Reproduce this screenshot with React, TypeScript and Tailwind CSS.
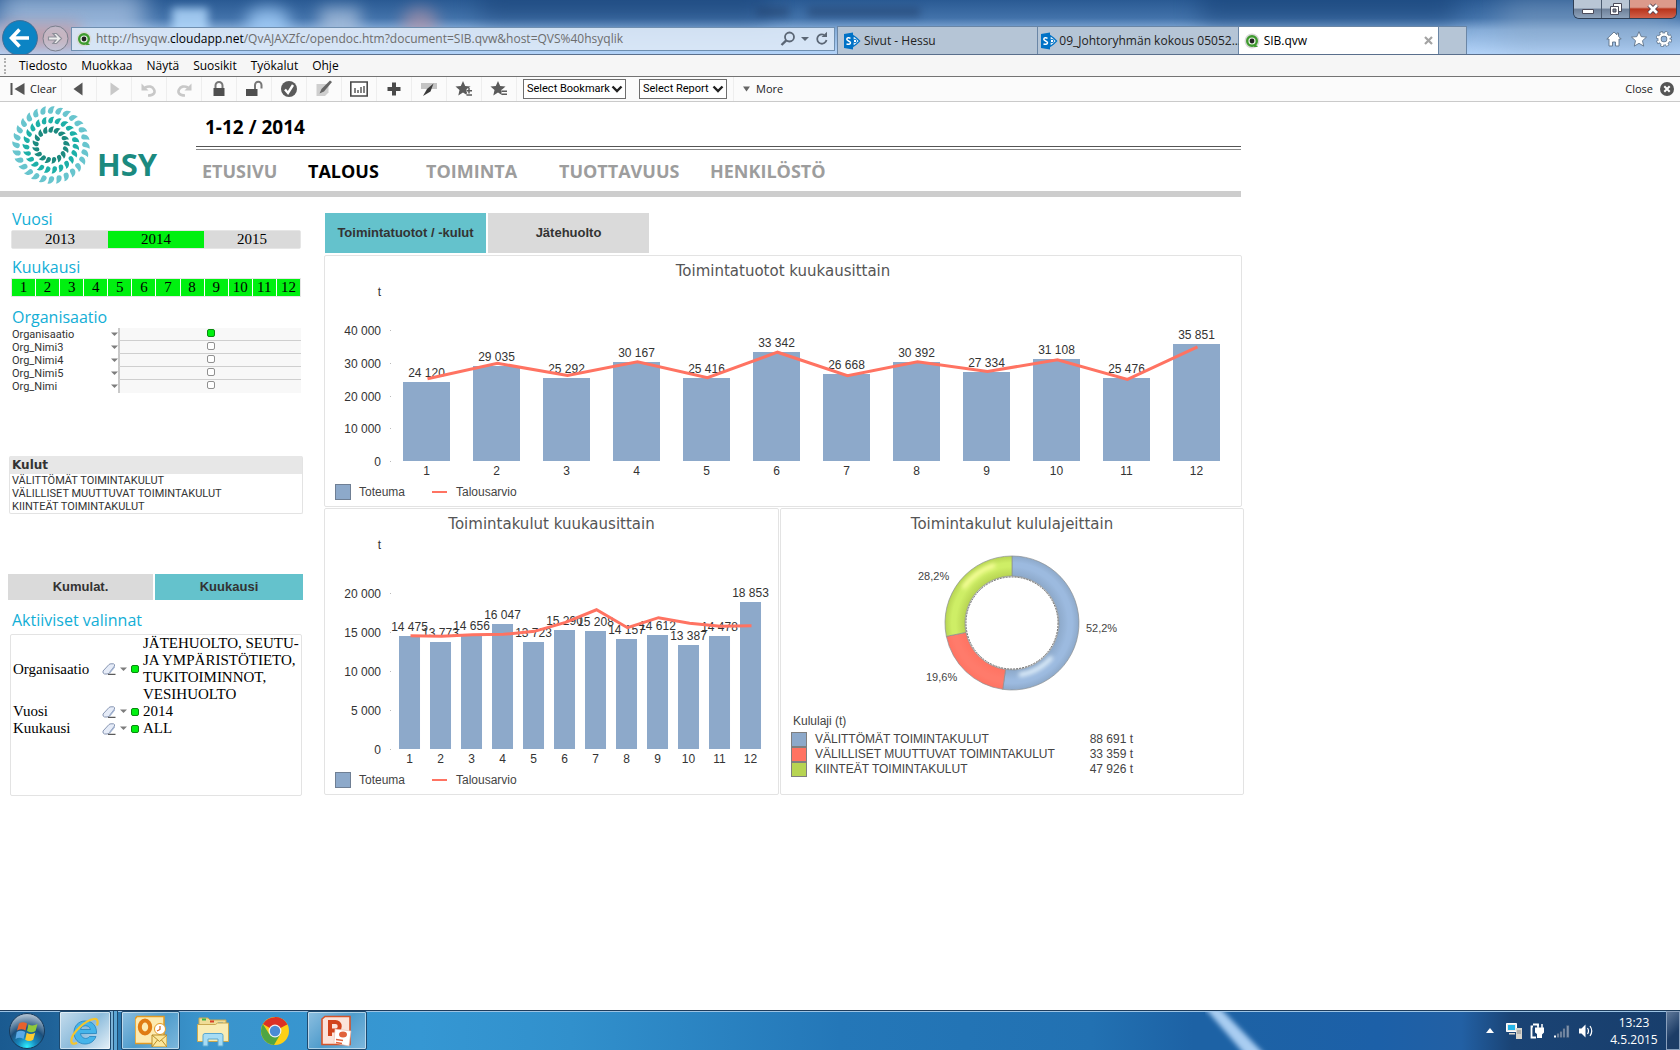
import React from 'react';
import clsx from 'clsx';

const UI_FONT = "font-['Open_Sans','Noto_Sans',sans-serif]";
const SMALL_FONT = "font-['Roboto','Open_Sans',sans-serif]";
const ARIAL = "font-['Liberation_Sans',Arial,sans-serif]";
const TIMES = "font-['Liberation_Serif','Times_New_Roman',serif]";

const MONTHS = [1, 2, 3, 4, 5, 6, 7, 8, 9, 10, 11, 12];

const formatNumber = (value: number) =>
  String(value).replace(/\B(?=(\d{3})+(?!\d))/g, '\u00a0');

/* ---------- Browser frame ---------- */

const QlikIcon = () => (
  <svg className="h-4 w-4 shrink-0" viewBox="0 0 16 16">
    <circle cx="8" cy="8" r="7.5" fill="#d9d9d9" />
    <circle cx="8" cy="8" r="4.8" fill="#e8f2e4" stroke="#3f9b2f" strokeWidth="2.4" />
    <path d="M10.5 10.5l3.5 3.5h-4z" fill="#3f9b2f" />
    <circle cx="8" cy="8" r="2.4" fill="#222" />
  </svg>
);

const SharePointIcon = () => (
  <svg className="h-[18px] w-[18px] shrink-0" viewBox="0 0 18 18">
    <path d="M10 3.5l3.5 2.5 3 3-3 3-3.5 2.5z" fill="#fff" stroke="#0072c6" strokeWidth="1.4" />
    <circle cx="12" cy="9" r="1.8" fill="none" stroke="#0072c6" />
    <path d="M1 2l9-1.5v17L1 16z" fill="#0072c6" />
    <path d="M7.5 6.3C6 5.5 3.8 5.600 3.8 7.200c0 2 3.7 1.500 3.7 3.600 0 1.700-2.400 1.800-4 1" fill="none" stroke="#fff" strokeWidth="1.500" />
  </svg>
);

const TitleBar = () => (
  <header className="relative h-[55px] overflow-hidden border-b border-[#5a6f8c] bg-[linear-gradient(to_bottom,#2a5a93_0px,#4272aa_18px,#86add9_30px,#b2d2f7_53px)]">
    <div className="absolute inset-0 overflow-hidden" aria-hidden="true">
      <div className="absolute -top-2 left-0 h-14 w-36 bg-[#b4cbe8] opacity-70 blur-md" />
      <div className="absolute top-6 left-0 h-6 w-20 bg-[#c98f92] opacity-70 blur-sm" />
      <div className="absolute top-2 left-[172px] h-8 w-9 bg-[#b6dcff] opacity-80 blur-xs" />
      <div className="absolute top-2 left-[246px] h-8 w-11 rounded-full bg-[#a5d0fb] opacity-80 blur-sm" />
      <div className="absolute top-2 left-[320px] h-8 w-10 bg-[#a9c0dd] opacity-80 blur-sm" />
      <div className="absolute top-2 left-[402px] h-8 w-9 rounded-full bg-[#c39aa8] opacity-60 blur-sm" />
      <div className="absolute -top-3 left-[480px] h-8 w-72 bg-[#1a4377] opacity-60 blur-md" />
      <div className="absolute -top-3 left-[1200px] h-9 w-64 bg-[#123c70] opacity-50 blur-md" />
      <div className="absolute top-0 left-[1500px] h-12 w-44 bg-[#8fabc9] opacity-50 blur-lg" />
      <div className="absolute top-2 left-[757px] h-2 w-8 bg-[#1f3c66] opacity-60 blur-xs" />
      <div className="absolute top-2 left-[808px] h-2 w-28 bg-[#1f3c66] opacity-60 blur-xs" />
    </div>
    <div className="relative flex h-[54px] items-end">
      <nav className="flex h-[52px] w-[71px] shrink-0 items-center pt-5">
        <button aria-label="Takaisin" className="ml-[2px] shrink-0">
          <svg className="h-9 w-9" viewBox="0 0 36 36">
            <circle cx="18" cy="18" r="17.4" fill="#0c84c4" stroke="#3c6e98" />
            <path d="M27 18H10M17.5 9.5L9.5 18l8 8.5" fill="none" stroke="#fff" strokeWidth="3.6" />
          </svg>
        </button>
        <button aria-label="Eteenpäin" className="ml-1 shrink-0">
          <svg className="h-[27px] w-[27px]" viewBox="0 0 27 27">
            <circle cx="13.5" cy="13.5" r="12.5" fill="#d8d3da" fillOpacity=".4" stroke="#7a7f8c" />
            <path d="M6.5 12h7.500L11 8.500h3.500l5 5-5 5H11l3-3.500H6.500z" fill="#eee" stroke="#8d8f99" strokeWidth="1.2" />
          </svg>
        </button>
      </nav>
      <div className="mb-[3px] flex h-6 min-w-0 flex-[754] items-center border border-[#6f8fb0] bg-[#dce8f6]/90 px-1">
        <QlikIcon />
        <div
          role="textbox"
          aria-label="Osoite"
          contentEditable
          suppressContentEditableWarning
          className="ml-1 min-w-0 flex-1 truncate text-[12px] leading-5 text-[#6d6d6d]"
        >
          http://hsyqw.<span className="text-black">cloudapp.net</span>/QvAJAXZfc/opendoc.htm?document=SIB.qvw&amp;host=QVS%40hsyqlik
        </div>
        <button aria-label="Haku">
          <svg className="h-4 w-4" viewBox="0 0 16 16" fill="none" stroke="#5b6675" strokeWidth="1.8">
            <circle cx="9.5" cy="6" r="4.5" />
            <path d="M6.3 9.3L1.5 14" strokeWidth="2.4" />
          </svg>
        </button>
        <svg className="mx-[5px] h-2 w-2" viewBox="0 0 8 8"><path d="M0 2h8L4 6z" fill="#5b6675" /></svg>
        <button aria-label="Päivitä">
          <svg className="h-4 w-4" viewBox="0 0 16 16" fill="none" stroke="#5b6675" strokeWidth="1.8">
            <path d="M12.5 9a4.7 4.7 0 1 1-2.500-5.200" />
            <path d="M7.5 6h5.500V.8z" fill="#5b6675" stroke="none" />
          </svg>
        </button>
      </div>
      <div role="tablist" className="ml-[2px] flex h-[28px] min-w-0 flex-[628] border border-b-0 border-[#6a86a6] text-[12px] text-[#222]">
        <button role="tab" className="flex min-w-0 flex-[194] items-center gap-[3px] border-r border-[#6a86a6] bg-[#b5c5d6] pl-[5px]">
          <SharePointIcon />
          <span className="truncate">Sivut - Hessu</span>
        </button>
        <button role="tab" className="flex min-w-0 flex-[197] items-center gap-px border-r border-[#6a86a6] bg-[#b5c5d6] pl-[2px]">
          <SharePointIcon />
          <span className="whitespace-nowrap">09_Johtoryhmän kokous 05052...</span>
        </button>
        <button role="tab" aria-selected="true" className="flex min-w-0 flex-[189] items-center border-r border-[#6a86a6] bg-white px-[5px]">
          <QlikIcon />
          <span className="ml-1 flex-1 text-left text-black">SIB.qvw</span>
          <svg className="h-[9px] w-[9px]" viewBox="0 0 9 9"><path d="M1 1l7 7M8 1L1 8" stroke="#a3a3a3" strokeWidth="2.2" /></svg>
        </button>
        <button aria-label="Uusi välilehti" className="flex-[27] bg-[#b5c5d6]" />
      </div>
      <div className="flex h-full flex-[210] flex-col items-end justify-between pr-[3px] pb-[7px]">
        <div className="flex h-[19px] w-[104px] overflow-hidden rounded-b-md border border-t-0 border-[#2f3f55]">
          <button aria-label="Pienennä" className="flex flex-[28] items-center justify-center border-r border-[#4b5b70] bg-[linear-gradient(#b9c6d5_45%,#6d8099_50%,#8fa3bb)]">
            <svg className="h-3 w-3" viewBox="0 0 12 12"><path d="M.5 6.5h11v4H.5z" fill="#fff" stroke="#4b4b5a" /></svg>
          </button>
          <button aria-label="Palauta" className="flex flex-[27] items-center justify-center border-r border-[#4b5b70] bg-[linear-gradient(#b9c6d5_45%,#6d8099_50%,#8fa3bb)]">
            <svg className="h-3 w-3" viewBox="0 0 12 12" fill="#fff" stroke="#4b4b5a">
              <path d="M3.5.5h8v8h-8z" />
              <path d="M.5 3.5h8v8h-8z" />
              <path d="M3 6h3v3H3z" fill="#7b8797" />
            </svg>
          </button>
          <button aria-label="Sulje" className="flex flex-[47] items-center justify-center bg-[linear-gradient(#dc9a8b_40%,#b8341c_50%,#d2614a)]">
            <svg className="h-3 w-3" viewBox="0 0 12 12">
              <path d="M2 2l8 8M10 2l-8 8" stroke="#4b3b4a" strokeWidth="4.5" />
              <path d="M2 2l8 8M10 2l-8 8" stroke="#fff" strokeWidth="2.8" />
            </svg>
          </button>
        </div>
        <div className="flex gap-[9px] pr-[5px]">
          <svg className="h-4 w-4" viewBox="0 0 16 16"><path d="M8 1L.8 8H3v7h3.500v-4h3v4H13V8h2.200L12.500 5.300V2H11v1.800z" fill="#fff" stroke="#5f7389" strokeWidth=".9" /></svg>
          <svg className="h-4 w-4" viewBox="0 0 16 16"><path d="M8 .6l2.200 5 5.300.5-4 3.600 1.200 5.400L8 12.300l-4.700 2.800 1.200-5.400-4-3.600 5.300-.5z" fill="#fff" stroke="#5f7389" strokeWidth=".9" /></svg>
          <svg className="h-4 w-4" viewBox="0 0 16 16" fill="none">
            <circle cx="8" cy="8" r="6.2" stroke="#5f7389" strokeWidth="3.6" strokeDasharray="3 1.87" />
            <circle cx="8" cy="8" r="4.5" stroke="#5f7389" strokeWidth="4" />
            <circle cx="8" cy="8" r="4.5" stroke="#fff" strokeWidth="2.4" />
            <circle cx="8" cy="8" r="6.2" stroke="#fff" strokeWidth="2.2" strokeDasharray="2 2.87" strokeDashoffset="-.5" />
          </svg>
        </div>
      </div>
    </div>
  </header>
);

const MENU = ['Tiedosto', 'Muokkaa', 'Näytä', 'Suosikit', 'Työkalut', 'Ohje'];

const MenuBar = () => (
  <nav className="flex h-[22px] items-center border-b border-[#737373] bg-[#f6f6f6] pl-1 text-[12px] text-black">
    <div className="h-4 w-[2px] border-l-2 border-dotted border-[#b0b0b0]" />
    <div className="ml-[13px] flex gap-[14px]">
      {MENU.map((item) => (
        <button key={item}>{item}</button>
      ))}
    </div>
  </nav>
);

/* ---------- QlikView toolbar ---------- */

const TOOLS: { label: string; icon: React.ReactNode }[] = [
  { label: 'Back', icon: <path d="M12.5 2.5v13L3.5 9z" fill="#555" /> },
  { label: 'Forward', icon: <path d="M5.5 2.5v13l9-6.5z" fill="#c8c8c8" /> },
  {
    label: 'Undo',
    icon: (
      <>
        <path d="M8 15.500c6 0 7.500-3 6-6S9 5.500 5 7.500" fill="none" stroke="#c8c8c8" strokeWidth="2.6" />
        <path d="M1.500 3.500v7h7z" fill="#c8c8c8" />
      </>
    ),
  },
  {
    label: 'Redo',
    icon: (
      <>
        <path d="M10 15.500c-6 0-7.500-3-6-6S9 5.500 13 7.500" fill="none" stroke="#c8c8c8" strokeWidth="2.6" />
        <path d="M16.500 3.500v7h-7z" fill="#c8c8c8" />
      </>
    ),
  },
  {
    label: 'Lock',
    icon: (
      <>
        <path d="M5.500 9V5.500a3.500 3.500 0 0 1 7 0V9" fill="none" stroke="#777" strokeWidth="2" />
        <path d="M3.500 8h11v8h-11z" fill="#4f4f4f" />
      </>
    ),
  },
  {
    label: 'Unlock',
    icon: (
      <>
        <path d="M10 9V5a3.200 3.200 0 0 1 6.500 0v3.500" fill="none" stroke="#777" strokeWidth="2" />
        <path d="M1 9h11.500v7H1z" fill="#4f4f4f" />
      </>
    ),
  },
  {
    label: 'Current selections',
    icon: (
      <>
        <circle cx="9" cy="9" r="8" fill="#5a5a5a" />
        <path d="M5 9.500l3 3.500 5-8" fill="none" stroke="#fff" strokeWidth="2.4" />
      </>
    ),
  },
  {
    label: 'Notes',
    icon: (
      <>
        <path d="M1.500 4h12v8.500l-3.500 3.500H1.500z" fill="#cfcfcf" />
        <path d="M15 .5L6.500 9 4.500 13.500 9 11.500 17 2z" fill="#666" />
      </>
    ),
  },
  {
    label: 'Chart',
    icon: (
      <>
        <path d="M.8 2h16.400v14H.8z" fill="#fff" stroke="#4a4a4a" strokeWidth="1.600" />
        <path d="M5 13V8M8 13v-3M11 13V7M14 13V6" stroke="#666" strokeWidth="1.600" />
      </>
    ),
  },
  { label: 'Add', icon: <path d="M9 2.500v13M2.500 9h13" stroke="#4a4a4a" strokeWidth="4" /> },
  {
    label: 'Edit',
    icon: (
      <>
        <path d="M1 3h16v6H1z" fill="#c4c4c4" />
        <path d="M13.500 3.500L7 9 3 16l7.500-4.500z" fill="#3a3a3a" />
      </>
    ),
  },
  {
    label: 'Add bookmark',
    icon: (
      <>
        <path d="M8 1l2.200 5 5.300.5-4 3.600L12.700 15.500 8 12.500 3.300 15.500l1.200-5.400-4-3.600L5.800 6z" fill="#5a5a5a" />
        <path d="M14 8v5.500M11.500 10.700h5.500M11.500 15h5.500" stroke="#fbfbfb" strokeWidth="3" />
        <path d="M14 8v5.500M11.500 10.700h5.500M11.500 15h5.500" stroke="#5a5a5a" strokeWidth="1.500" />
      </>
    ),
  },
  {
    label: 'Remove bookmark',
    icon: (
      <>
        <path d="M8 1l2.200 5 5.300.5-4 3.600L12.700 15.500 8 12.500 3.300 15.500l1.200-5.400-4-3.600L5.800 6z" fill="#5a5a5a" />
        <path d="M11.500 11.300h5.500M11.500 14.300h5.500" stroke="#fbfbfb" strokeWidth="3" />
        <path d="M11.500 11.300h5.500M11.500 14.300h5.500" stroke="#5a5a5a" strokeWidth="1.500" />
      </>
    ),
  },
];

const ToolbarSelect = ({ label, className }: { label: string; className: string }) => (
  <div className={clsx('relative', className)}>
    <select
      aria-label={label}
      className={clsx('block h-5 w-full appearance-none border border-[#6e6e6e] bg-white pl-[3px] text-[11px] leading-4 text-black', SMALL_FONT)}
    >
      <option>{label}</option>
    </select>
    <svg className="pointer-events-none absolute top-[6px] right-[3px] h-2 w-3" viewBox="0 0 12 8">
      <path d="M1.500 1.500L6 6l4.500-4.500" fill="none" stroke="#222" strokeWidth="2.4" />
    </svg>
  </div>
);

const QlikToolbar = () => (
  <div className="flex h-[25px] items-center border-b border-[#cacaca] bg-[#fbfbfb] text-[11px] text-[#222]">
    <button className="flex h-full w-[62px] items-center gap-[5px] border-r border-[#eee] pl-[10px]">
      <svg className="h-[14px] w-[15px]" viewBox="0 0 15 14">
        <path d="M.5 1h2v12h-2zM14.500 1v12L4.500 7z" fill="#555" />
      </svg>
      Clear
    </button>
    {TOOLS.map(({ label, icon }) => (
      <button key={label} aria-label={label} className="flex h-full w-[35px] items-center justify-center border-r border-[#eee]">
        <svg className="h-[18px] w-[18px]" viewBox="0 0 18 18">{icon}</svg>
      </button>
    ))}
    <ToolbarSelect label="Select Bookmark" className="ml-[6px] w-[103px]" />
    <ToolbarSelect label="Select Report" className="ml-[13px] w-[88px]" />
    <button className="ml-[6px] flex h-full items-center gap-[6px] border-l border-[#eee] pl-[9px]">
      <svg className="h-[6px] w-[7px]" viewBox="0 0 7 6"><path d="M0 .5h7L3.500 5.500z" fill="#666" /></svg>
      More
    </button>
    <button className="mr-[6px] ml-auto flex items-center gap-[7px]">
      Close
      <svg className="h-[14px] w-[14px]" viewBox="0 0 14 14">
        <circle cx="7" cy="7" r="7" fill="#555" />
        <path d="M4.300 4.300l5.400 5.400M9.700 4.300L4.300 9.700" stroke="#fff" strokeWidth="2" />
      </svg>
    </button>
  </div>
);

/* ---------- Page header ---------- */

const LOGO_RINGS = [
  { count: 28, radius: 35, size: 0.95, color: '#68c5ce' },
  { count: 23, radius: 25, size: 0.85, color: '#1db0a8' },
  { count: 17, radius: 15.500, size: 0.8, color: '#1b8a7f' },
];

const HsyLogo = () => (
  <svg className="h-[80px] w-[80px] shrink-0" viewBox="-40 -40 80 80" aria-hidden="true">
    {LOGO_RINGS.map(({ count, radius, size, color }) =>
      Array.from({ length: count }, (_, i) => (
        <path
          key={`${color}-${i}`}
          d="M3 -4.500C0 -4.500 -3 -2 -3 1.200A2.700 2.700 0 0 0 2.400 1.600C2.600 -.5 1.800 -2 3 -4.500Z"
          fill={color}
          transform={`rotate(${(360 / count) * i}) translate(0 ${-radius}) rotate(12) scale(${size})`}
        />
      ))
    )}
  </svg>
);

const NAV = [
  { label: 'ETUSIVU', width: 'w-[106px]' },
  { label: 'TALOUS', width: 'w-[118px]', active: true },
  { label: 'TOIMINTA', width: 'w-[133px]' },
  { label: 'TUOTTAVUUS', width: 'w-[151px]' },
  { label: 'HENKILÖSTÖ', width: 'w-[130px]' },
];

const PageHeader = () => (
  <div className="mr-[3px] flex h-[95px] border-b-[6px] border-[#cdcdcd]">
    <div className="flex w-[196px] shrink-0 items-start pt-[3px] pl-[11px]">
      <HsyLogo />
      <span className="mt-[39px] ml-[6px] text-[31px] leading-10 font-bold text-[#1b8a7f]">HSY</span>
    </div>
    <div className="flex-1">
      <h1 className="pt-[13px] pb-[7px] pl-[9px] text-[19px] leading-6 font-bold text-black">1-12 / 2014</h1>
      <div className="h-1 border-y border-t-[#555] border-b-[#8a8a8a]" />
      <nav className="flex pt-[9px] pl-[6px] text-[18px] leading-6 font-bold">
        {NAV.map(({ label, width, active }) => (
          <a key={label} href="#" className={clsx('shrink-0', width, active ? 'text-black' : 'text-[#9d9d9d]')}>
            {label}
          </a>
        ))}
      </nav>
    </div>
  </div>
);

/* ---------- Sidebar ---------- */

const SectionTitle = ({ children, className }: { children: React.ReactNode; className?: string }) => (
  <h2 className={clsx('pl-1 text-[16px] leading-[22px] text-[#12aed6]', className)}>{children}</h2>
);

const DownArrow = () => (
  <svg className="h-[5px] w-[7px] shrink-0" viewBox="0 0 7 5"><path d="M0 .5h7L3.500 4z" fill="#7d7d7d" /></svg>
);

const Indicator = ({ on }: { on: boolean }) => (
  <span className={clsx('block h-2 w-2 shrink-0 rounded-xs border', on ? 'border-[#0a8a10] bg-[#00f010]' : 'border-[#909090] bg-white')} />
);

const Eraser = () => (
  <svg className="h-3 w-[14px] shrink-0" viewBox="0 0 14 12">
    <path d="M1 8L7 1.500Q8 .8 9 .8h2.500Q13 1.200 12.500 3L7.500 9.500Q6.500 11 5 11H2.500Q.5 10.500 1 8z" fill="#e6ecf8" stroke="#8896b2" />
    <path d="M6.500 10.500L12.500 3l.3 1.500L8 10.500z" fill="#9fb0cf" />
    <path d="M6 11.300h7.500" stroke="#333" />
  </svg>
);

const ORG_LEVELS = ['Organisaatio', 'Org_Nimi3', 'Org_Nimi4', 'Org_Nimi5', 'Org_Nimi'];
const COST_TYPES = ['VÄLITTÖMÄT TOIMINTAKULUT', 'VÄLILLISET MUUTTUVAT TOIMINTAKULUT', 'KIINTEÄT TOIMINTAKULUT'];

const SELECTIONS = [
  { field: 'Organisaatio', value: 'JÄTEHUOLTO, SEUTU- JA YMPÄRISTÖTIETO, TUKITOIMINNOT, VESIHUOLTO' },
  { field: 'Vuosi', value: '2014' },
  { field: 'Kuukausi', value: 'ALL' },
];

const Sidebar = () => (
  <aside className="w-[324px] shrink-0 pt-[11px] pr-[21px] pl-2">
    <SectionTitle>Vuosi</SectionTitle>
    <div className={clsx('mr-[2px] ml-[3px] flex h-[19px] rounded-xs border border-[#e6e6e6] text-[15px] leading-[17px]', TIMES)}>
      {[2013, 2014, 2015].map((year) => (
        <button key={year} className={clsx('flex-1', year === 2014 ? 'bg-[#00f010]' : 'bg-[#dadada]')}>
          {year}
        </button>
      ))}
    </div>

    <SectionTitle className="mt-[7px]">Kuukausi</SectionTitle>
    <div className={clsx('mr-[2px] ml-[3px] flex h-[19px] gap-px border border-[#e6e6e6] text-[15px] leading-[17px]', TIMES)}>
      {MONTHS.map((month) => (
        <button key={month} className="flex-1 bg-[#00f010]">{month}</button>
      ))}
    </div>

    <SectionTitle className="mt-[9px]">Organisaatio</SectionTitle>
    <ul className={clsx('mr-[2px] ml-1 text-[11px] leading-[13px] text-[#333]', SMALL_FONT)}>
      {ORG_LEVELS.map((level, i) => (
        <li key={level} className="flex h-[13px]">
          <button className="flex w-[106px] shrink-0 items-center justify-between overflow-hidden">
            {level}
            <DownArrow />
          </button>
          <div className={clsx('flex flex-1 justify-center border-l-2 border-l-[#c9c9c9] bg-[#f8f8f8] pt-px', i < 4 && 'border-b border-b-[#cfcfcf]')}>
            <Indicator on={i === 0} />
          </div>
        </li>
      ))}
    </ul>

    <section className="mt-[63px] ml-px rounded-xs border border-t-0 border-[#e3e3e3] text-[#333]">
      <h2 className="bg-[#e7e7e7] pl-[2px] font-['DejaVu_Sans',sans-serif] text-[12px] leading-[18px] font-bold">Kulut</h2>
      <ul className={clsx('pl-[2px] text-[11px] leading-[13px]', SMALL_FONT)}>
        {COST_TYPES.map((type) => (
          <li key={type}>{type}</li>
        ))}
      </ul>
    </section>

    <div className={clsx('mt-[60px] flex h-[26px] gap-[2px] text-[13px] font-bold text-[#333]', ARIAL)}>
      <button className="flex-[145] bg-[#dadada]">Kumulat.</button>
      <button className="flex-[148] bg-[#64c2cc]">Kuukausi</button>
    </div>

    <SectionTitle className="mt-[9px]">Aktiiviset valinnat</SectionTitle>
    <div className="mr-px ml-[2px] mt-[3px] h-[162px] rounded-xs border border-[#e3e3e3]">
      <table className={clsx('w-full text-[15px] leading-[17px] text-black', TIMES)}>
        <tbody>
          {SELECTIONS.map(({ field, value }) => (
            <tr key={field}>
              <th scope="row" className="w-[91px] pl-[2px] text-left font-normal">{field}</th>
              <td className="w-[41px]">
                <div className="flex items-center gap-1">
                  <button aria-label={`Tyhjennä ${field}`}><Eraser /></button>
                  <DownArrow />
                  <Indicator on />
                </div>
              </td>
              <td>{value}</td>
            </tr>
          ))}
        </tbody>
      </table>
    </div>
  </aside>
);

/* ---------- Charts ---------- */

interface ComboChartProps {
  title: string;
  width: number;
  height: number;
  baseline: number;
  pxPerThousand: number;
  ticks: number[];
  firstBar: number;
  barWidth: number;
  pitch: number;
  actual: number[];
  budget: number[];
}

const Panel = ({ title, className, children }: { title: string; className?: string; children: React.ReactNode }) => (
  <section className={clsx('rounded-xs border border-[#e3e3e3] bg-white text-[12px] text-[#444]', ARIAL, className)}>
    <h3 className="text-center font-['DejaVu_Sans',sans-serif] text-[15px] leading-[30px] text-[#555]">{title}</h3>
    {children}
  </section>
);

const ComboChart = ({
  title, width, height, baseline, pxPerThousand, ticks, firstBar, barWidth, pitch, actual, budget,
}: ComboChartProps) => {
  const y = (value: number) => baseline - (value / 1000) * pxPerThousand;
  const center = (i: number) => firstBar + pitch * i + barWidth / 2;

  return (
    <>
      <svg className="block h-auto w-full text-[12px]" viewBox={`0 0 ${width} ${height}`} role="img" aria-label={title} fill="#333">
        <text x="56" y="10" textAnchor="end">t</text>
        {ticks.map((tick) => (
          <g key={tick}>
            <text x="56" y={y(tick) + 5} textAnchor="end">{formatNumber(tick)}</text>
            <rect x="65" y={Math.round(y(tick))} width="1" height="1" fill="#bbb" />
          </g>
        ))}
        {actual.map((value, i) => (
          <rect
            key={i}
            x={firstBar + pitch * i}
            y={Math.round(y(value))}
            width={barWidth}
            height={baseline - Math.round(y(value))}
            fill="#8da9ca"
          />
        ))}
        {actual.map((value, i) => (
          <g key={i} textAnchor="middle">
            <text x={center(i)} y={Math.round(y(value)) - 5}>{formatNumber(value)}</text>
            <text x={center(i)} y={baseline + 14}>{MONTHS[i]}</text>
          </g>
        ))}
        <polyline
          points={budget.map((value, i) => `${center(i) + 1},${y(value)}`).join(' ')}
          fill="none"
          stroke="#ff7362"
          strokeWidth="3"
        />
      </svg>
      <div className="flex h-[26px] items-start pt-1 pl-[10px] leading-4">
        <span className="h-4 w-4 border border-[#6f7f94] bg-[#8da9ca]" />
        <span className="ml-2 w-[73px]">Toteuma</span>
        <span className="mt-[7px] h-[2px] w-[15px] bg-[#ff7362]" />
        <span className="ml-[9px]">Talousarvio</span>
      </div>
    </>
  );
};

const SLICES = [
  { label: 'VÄLITTÖMÄT TOIMINTAKULUT', value: 88691, share: 52.2, color: '#8da9ca', light: '#9cbadf' },
  { label: 'VÄLILLISET MUUTTUVAT TOIMINTAKULUT', value: 33359, share: 19.6, color: '#ff7362', light: '#ff7b6b' },
  { label: 'KIINTEÄT TOIMINTAKULUT', value: 47926, share: 28.2, color: '#b7d452', light: '#ceee66' },
];

const CX = 231;
const CY = 84;
const OUTER = 67;
const INNER = 47;

const point = (radius: number, share: number) => {
  const angle = (share / 100) * 2 * Math.PI;
  return `${CX + radius * Math.sin(angle)} ${CY - radius * Math.cos(angle)}`;
};

const DonutChart = () => {
  let start = 0;
  const paths = SLICES.map(({ label, share }, i) => {
    const end = start + share;
    const large = share > 50 ? 1 : 0;
    const d = `M${point(OUTER, start)}A${OUTER} ${OUTER} 0 ${large} 1 ${point(OUTER, end)}L${point(INNER, end)}A${INNER} ${INNER} 0 ${large} 0 ${point(INNER, start)}Z`;
    start = end;
    return <path key={label} d={d} fill={`url(#slice${i})`} stroke="#8b8f92" strokeWidth="1" strokeOpacity=".7" />;
  });

  return (
    <>
      <svg className="block h-auto w-full text-[11px]" viewBox="0 0 462 172" role="img" aria-label="Toimintakulut kululajeittain" fill="#444">
        <defs>
          {SLICES.map(({ label, color, light }, i) => (
            <radialGradient key={label} id={`slice${i}`} gradientUnits="userSpaceOnUse" cx={CX} cy={CY} r={OUTER}>
              <stop offset="0.7" stopColor={color} />
              <stop offset="0.84" stopColor={light} />
              <stop offset="0.9" stopColor={light} />
              <stop offset="1" stopColor={color} />
            </radialGradient>
          ))}
          <filter id="soft" x="-50%" y="-50%" width="200%" height="200%"><feGaussianBlur stdDeviation="2" /></filter>
        </defs>
        {paths}
        <path d="M238 136A53 53 0 0 0 271 118" fill="none" stroke="#e8f6ff" strokeWidth="4" filter="url(#soft)" />
        <path d="M182 49A61 61 0 0 1 214 26" fill="none" stroke="#fcffa0" strokeWidth="4" filter="url(#soft)" />
        <circle cx={CX} cy={CY} r={INNER - 1} fill="#fff" stroke="#333" strokeDasharray="2 1" strokeOpacity=".7" />
        <text x="137" y="41">28,2%</text>
        <text x="305" y="93">52,2%</text>
        <text x="145" y="142">19,6%</text>
      </svg>
      <div className="px-[10px] pb-[15px]">
        <div className="pl-[2px] leading-[21px]">Kululaji (t)</div>
        <table className="leading-[15px]">
          <tbody>
            {SLICES.map(({ label, value, color }) => (
              <tr key={label}>
                <td>
                  <span className="block h-[15px] w-4 border border-[#7f7f7f]" style={{ backgroundColor: color }} />
                </td>
                <td className="w-[264px] pl-2 whitespace-nowrap">{label}</td>
                <td className="w-[62px] text-right whitespace-nowrap">{formatNumber(value)} t</td>
              </tr>
            ))}
          </tbody>
        </table>
      </div>
    </>
  );
};

const INCOME = {
  title: 'Toimintatuotot kuukausittain',
  width: 916,
  height: 194,
  baseline: 175,
  pxPerThousand: 3.267,
  ticks: [40000, 30000, 20000, 10000, 0],
  firstBar: 78,
  barWidth: 47,
  pitch: 70,
  actual: [24120, 29035, 25292, 30167, 25416, 33342, 26668, 30392, 27334, 31108, 25476, 35851],
  budget: [25200, 29900, 26200, 30400, 25500, 33300, 26100, 30400, 27400, 31000, 25000, 34900],
};

const EXPENSES = {
  title: 'Toimintakulut kuukausittain',
  width: 453,
  height: 229,
  baseline: 210,
  pxPerThousand: 7.78,
  ticks: [20000, 15000, 10000, 5000, 0],
  firstBar: 74,
  barWidth: 21,
  pitch: 31,
  actual: [14475, 13773, 14656, 16047, 13723, 15290, 15208, 14157, 14612, 13387, 14478, 18853],
  budget: [14560, 14480, 14690, 14740, 15120, 16280, 17900, 15590, 16880, 16160, 15770, 15850],
};

const Dashboard = () => (
  <main className="min-w-0 flex-1 pt-4">
    <div className={clsx('flex h-10 gap-[2px] pl-px text-[13px] font-bold text-[#333]', ARIAL)}>
      <button className="w-[161px] bg-[#64c2cc]">Toimintatuotot / -kulut</button>
      <button className="w-[161px] bg-[#dadada]">Jätehuolto</button>
    </div>
    <Panel title={INCOME.title} className="mt-[2px] mr-[2px]">
      <ComboChart {...INCOME} />
    </Panel>
    <div className="mt-px flex gap-px">
      <Panel title={EXPENSES.title} className="flex-[455]">
        <ComboChart {...EXPENSES} />
      </Panel>
      <Panel title="Toimintakulut kululajeittain" className="flex-[464]">
        <DonutChart />
      </Panel>
    </div>
  </main>
);

/* ---------- Taskbar ---------- */

const TASK_BUTTON = 'flex h-full items-center justify-center rounded-xs border border-[#1d4a70] shadow-[inset_0_0_0_1px_#ffffff80]';

const Taskbar = () => (
  <footer className="flex h-10 items-stretch border-t border-[#1e3c5c] bg-[linear-gradient(to_right,#1a5a90_0px,#1f6298_50px,#3a94cc_200px,#3597d3_25%,#3190cc_34%,#2477b8_50%,#2271b2_65%,#1d62a5_71%,#1d62a5_73%,#1c60a8_82%,#2260a4_87%,#1a4374_90%,#183e6c_100%)] text-white shadow-[inset_0_1px_0_#9cc3e4]">
    <button aria-label="Käynnistä" className="ml-[8px] self-center">
      <svg className="h-[38px] w-[38px]" viewBox="0 0 38 38">
        <defs>
          <radialGradient id="orb" cx=".5" cy=".95" r=".9">
            <stop offset="0" stopColor="#2ff0ff" />
            <stop offset=".3" stopColor="#1787bd" />
            <stop offset=".6" stopColor="#1c4f7c" />
            <stop offset="1" stopColor="#a9bccd" />
          </radialGradient>
        </defs>
        <circle cx="19" cy="19" r="17.5" fill="url(#orb)" stroke="#163a5c" />
        <path d="M11 11.500q4-2.500 8 0l-1.500 7q-4-2.500-8.500 0z" fill="#e8622c" />
        <path d="M20.500 12.300q4 2.500 9-.3l-2 7q-4 2.500-8.500 0z" fill="#8fc93c" />
        <path d="M8.700 20q4-2.500 8.500 0l-1.700 7q-4-2.500-8 0z" fill="#5aa9e6" />
        <path d="M18.700 20.700q4 2.500 8.500 0l-2 7q-4 2.500-8 0z" fill="#fccb30" />
      </svg>
    </button>
    <button aria-label="Internet Explorer" className={clsx('ml-[13px] w-[52px] bg-[linear-gradient(135deg,#c5dcec,#8dbcdc_50%,#e6f1f8)]', TASK_BUTTON)}>
      <svg className="h-8 w-8" viewBox="0 0 32 32">
        <path d="M27.500 18.500H11.500c.5 5 6.500 6.500 9 3h6.500c-2 5-6 7.500-11 7.500C9.500 29 5 24 5 17.500S9.500 6 16 6c7.500 0 12 5 11.500 12.500zM21.500 14.500c-1-5-9-5-10 0z" fill="#45b4ea" stroke="#2583bd" strokeWidth=".8" />
        <path d="M28 10.500c1.500-4 .5-7-3-6.500C17 5 3 17 2.300 25.500c-.3 3.500 3 4 5.700 2.300" fill="none" stroke="#f5c52c" strokeWidth="2.2" />
      </svg>
    </button>
    <div className="w-[3px] border-r border-[#1d4a70] bg-[#7db4d8]" />
    <div className="w-[4px] border-r border-[#1d4a70] bg-[#5ba5d4]" />
    <button aria-label="Outlook" className={clsx('ml-[3px] w-[59px] bg-[linear-gradient(135deg,#8dbfe0,#4f9ccc_50%,#7db8dd)]', TASK_BUTTON)}>
      <svg className="h-8 w-8" viewBox="0 0 32 32">
        <path d="M2 1.500h27v27H0V4z" fill="#fdeab0" stroke="#e39a22" strokeWidth="1.5" />
        <ellipse cx="10" cy="12" rx="5.2" ry="6.5" fill="none" stroke="#e07b12" strokeWidth="4" />
        <circle cx="25" cy="14" r="5.5" fill="#fff" stroke="#e39a22" />
        <path d="M25 11v3.500l-3 1.500" fill="none" stroke="#d9661c" strokeWidth="1.2" />
        <path d="M17 20h15v12H17z" fill="#fbe79d" stroke="#b88d2a" />
        <path d="M17 20l7.500 6.500L32 20M17 32l5.500-7M32 32l-5.500-7" fill="none" stroke="#b88d2a" />
      </svg>
    </button>
    <button aria-label="Resurssienhallinta" className="ml-[17px] self-center">
      <svg className="h-8 w-8" viewBox="0 0 32 32">
        <path d="M2 3h9l2 2h16v10H2z" fill="#f0dc96" stroke="#c8a850" />
        <path d="M5 3.500h4v2H5z" fill="#3bb54a" />
        <path d="M13 5.500h4v2h-4z" fill="#d9412b" />
        <path d="M21 7.500h5v2h-5z" fill="#3c9be0" />
        <path d="M.5 9.500h18l2-1.500h11v18.500H.5z" fill="#f9ecb4" stroke="#c8a850" />
        <path d="M6 31V20.500q0-2 2-2h16q2 0 2 2V31h-5v-7H11v7z" fill="#a6dcf4" stroke="#5aa7cf" />
      </svg>
    </button>
    <button aria-label="Chrome" className="ml-[32px] self-center">
      <svg className="h-7 w-7" viewBox="0 0 28 28">
        <circle cx="14" cy="14" r="14" fill="#fdd016" />
        <path d="M14 14L1.900 7A14 14 0 0 1 26.100 7.500z" fill="#dc3126" />
        <path d="M14 0a14 14 0 0 1 12.200 7.500H14z" fill="#dc3126" />
        <path d="M1.900 7A14 14 0 0 0 13 28l6.500-11L14 14 8.500 17.500z" fill="#4fa544" />
        <circle cx="14" cy="14" r="6.4" fill="#f2f2f2" />
        <circle cx="14" cy="14" r="5.2" fill="#4a8bd6" />
      </svg>
    </button>
    <button aria-label="PowerPoint" className={clsx('ml-[18px] w-[60px] bg-[linear-gradient(135deg,#8dbfe0,#4f9ccc_50%,#7db8dd)]', TASK_BUTTON)}>
      <svg className="h-8 w-8" viewBox="0 0 32 32">
        <path d="M4 1.500h25v28H1V4z" fill="#fbe3da" stroke="#d4532a" strokeWidth="1.6" />
        <path d="M9 21V7h5.500a4 4 0 0 1 0 8.500H10" fill="none" stroke="#d1431c" strokeWidth="4" />
        <path d="M14 14l16 2-2 15-15-3z" fill="#fff" stroke="#e9b8a8" strokeWidth=".6" />
        <ellipse cx="22" cy="19.500" rx="4" ry="3" fill="#e0623c" />
        <path d="M15 24.500l7 1M15 27.500l6 1" stroke="#e0623c" strokeWidth="1.4" />
      </svg>
    </button>
    <div className="flex-1">
      <svg className="ml-auto h-full w-[281px] overflow-hidden" viewBox="0 0 281 39" aria-hidden="true">
        <defs><filter id="ray" x="-50%" width="200%"><feGaussianBlur stdDeviation="2.5" /></filter></defs>
        <path d="M-1 -4h15l48 50H42z" fill="#a9cdf2" filter="url(#ray)" />
      </svg>
    </div>
    <div className="flex items-center">
      <svg className="h-[5px] w-2" viewBox="0 0 8 5"><path d="M0 5h8L4 0z" fill="#fff" /></svg>
      <svg className="ml-3 h-4 w-4" viewBox="0 0 16 16">
        <path d="M.5.500h10v8H.5z" fill="#e9e9e9" stroke="#fff" />
        <path d="M2 2h7v5H2z" fill="#26b5e8" />
        <path d="M3 10h6v1.500H3zM10 5h6v11h-6z" fill="#d9d5cc" />
        <path d="M11 8h4M11 10h4" stroke="#888" />
      </svg>
      <svg className="ml-2 h-4 w-4" viewBox="0 0 16 16">
        <path d="M3 1.500h5v2M6 14.500H1.500V3.500H3" fill="none" stroke="#fff" strokeWidth="1.8" />
        <path d="M5 4.500h9v5l-2 2v3.500H7V11L5 9.500z" fill="#fff" />
        <path d="M8 1v4M12 1v4" stroke="#fff" strokeWidth="1.5" />
      </svg>
      <svg className="ml-2 h-4 w-4" viewBox="0 0 16 16">
        <path d="M0 12.500h2v2H0z" fill="#fff" />
        <path d="M3 10.500h2v4H3zM6 8.500h2v6H6zM9 5.500h2v9H9zM12.500 2.500h2.500v12h-2.500z" fill="#7f93ad" stroke="#3a5272" strokeWidth=".5" />
      </svg>
      <svg className="ml-2 h-4 w-4" viewBox="0 0 16 16">
        <path d="M1 5.500h2.500L7.500 1.500v13L3.500 10.500H1z" fill="#fff" />
        <path d="M9.500 5q2 3 0 6M12 3q3.500 5 0 10" fill="none" stroke="#fff" strokeWidth="1.2" />
      </svg>
      <div className="ml-[10px] w-[60px] text-center text-[12px] leading-[17px]">
        <div>13:23</div>
        <div>4.5.2015</div>
      </div>
      <button aria-label="Näytä työpöytä" className="ml-[2px] h-full w-[14px] border border-[#8aa0bd] bg-[linear-gradient(135deg,#5f7899,#1c3c66_60%)]" />
    </div>
  </footer>
);

export default function App() {
  return (
    <div className={clsx('flex min-h-screen flex-col bg-white', UI_FONT)}>
      <TitleBar />
      <MenuBar />
      <QlikToolbar />
      <div className="w-full max-w-[1244px] flex-1">
        <PageHeader />
        <div className="flex">
          <Sidebar />
          <Dashboard />
        </div>
      </div>
      <Taskbar />
    </div>
  );
}
